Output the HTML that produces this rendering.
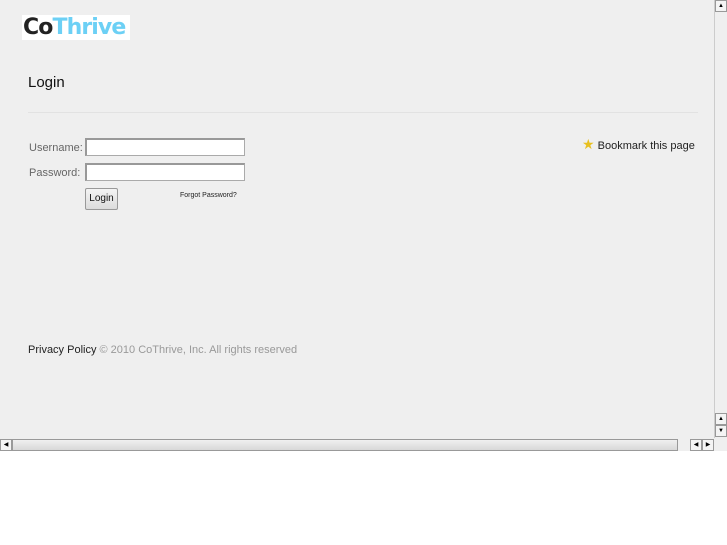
<!DOCTYPE html>
<html><head><style>
body{margin:0;width:727px;height:545px;background:#fff;font-family:"Liberation Sans",sans-serif;position:relative;overflow:hidden}
.main{position:absolute;left:0;top:0;width:714px;height:438px;background:#efefef}
.a{position:absolute}
input{position:absolute;box-sizing:border-box;background:#fff;border:1px solid #aaa;border-top:2px solid #999;border-left:2px solid #999;height:18px;width:160px;padding:0}
.lbl{font-size:11px;color:#666}
</style></head><body>
<div class="main">
<div class="a" style="left:22px;top:15px;width:108px;height:25px;background:#fff;overflow:hidden;font:bold 22px 'DejaVu Sans',sans-serif;line-height:26px;letter-spacing:-0.9px;white-space:nowrap;padding-left:1px;box-sizing:border-box"><span style="color:#222">Co</span><span style="color:#6cd0f5">Thrive</span></div>
<div class="a" style="left:28px;top:74px;font-size:15px;color:#111">Login</div>
<div class="a" style="left:28px;top:112px;width:670px;height:1px;background:#e2e2e2"></div>
<div class="a lbl" style="left:29px;top:142px">Username:</div>
<div class="a lbl" style="left:29px;top:167px">Password:</div>
<input style="left:85px;top:138px">
<input style="left:85px;top:163px">
<div class="a" style="left:85px;top:188px;width:33px;height:22px;box-sizing:border-box;border:1px solid #999;border-radius:2px;background:linear-gradient(#f4f4f4,#dcdcdc);font-size:10px;text-align:center;line-height:20px;color:#111">Login</div>
<div class="a" style="left:180px;top:192px;font-size:7px;color:#222">Forgot Password?</div>
<div class="a" style="left:582px;top:136px;font-size:11px;color:#222"><span style="color:#e8c020;font-size:14px">★</span> Bookmark this page</div>
<div class="a" style="left:28px;top:344px;font-size:11px;color:#999"><span style="color:#222">Privacy Policy</span> © 2010 CoThrive, Inc. All rights reserved</div>
</div>
<div class="a" style="left:714px;top:0;width:13px;height:438px;background:#efefef;border-left:1px solid #ccc;box-sizing:border-box"></div>
<div class="a" style="left:715px;top:0;width:12px;height:12px;border:1px solid #999;box-sizing:border-box;background:#f4f4f4;font-size:6px;text-align:center;line-height:10px">▲</div>
<div class="a" style="left:715px;top:413px;width:12px;height:12px;border:1px solid #999;box-sizing:border-box;background:#f4f4f4;font-size:6px;text-align:center;line-height:10px">▲</div>
<div class="a" style="left:715px;top:425px;width:12px;height:12px;border:1px solid #999;box-sizing:border-box;background:#f4f4f4;font-size:6px;text-align:center;line-height:10px">▼</div>
<div class="a" style="left:0;top:438px;width:727px;height:13px;background:#efefef"></div>
<div class="a" style="left:0;top:439px;width:12px;height:12px;border:1px solid #999;box-sizing:border-box;background:#f4f4f4;font-size:6px;text-align:center;line-height:10px">◀</div>
<div class="a" style="left:12px;top:439px;width:666px;height:12px;border:1px solid #999;box-sizing:border-box;background:linear-gradient(#f0f0f0,#d8d8d8)"></div>
<div class="a" style="left:690px;top:439px;width:12px;height:12px;border:1px solid #999;box-sizing:border-box;background:#f4f4f4;font-size:6px;text-align:center;line-height:10px">◀</div>
<div class="a" style="left:702px;top:439px;width:12px;height:12px;border:1px solid #999;box-sizing:border-box;background:#f4f4f4;font-size:6px;text-align:center;line-height:10px">▶</div>
</body></html>
